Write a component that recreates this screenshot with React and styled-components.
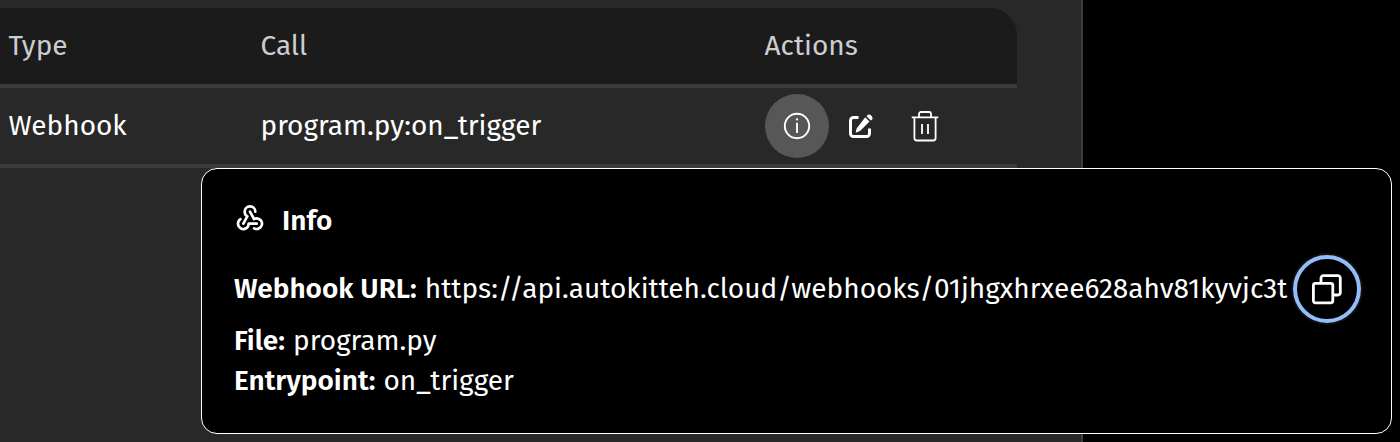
import React from "react";
import styled, { createGlobalStyle } from "styled-components";

const GlobalStyle = createGlobalStyle`
  * { box-sizing: border-box; }
  body {
    margin: 0;
    background: #000;
    color: #fff;
    font-family: "Fira Sans", "Noto Sans", sans-serif;
    font-size: 28px;
    line-height: 40px;
    -webkit-font-smoothing: antialiased;
    overflow: hidden;
  }
`;

const Page = styled.div`
  position: relative;
  height: 442px;
`;

const Panel = styled.main`
  width: 1083px;
  height: 442px;
  padding-top: 8px;
  background: #282828;
  border-right: 2px solid #3d3d3d;
`;

const Table = styled.div`
  width: 1017px;
`;

const Row = styled.div`
  display: grid;
  grid-template-columns: 252px 504px 1fr;
  align-items: center;
  height: 80px;
  padding-left: 8.5px;
  border-bottom: 4px solid #3b3b3b;
`;

const HeaderRow = styled(Row)`
  color: #cdcdd1;
  background: #1b1b1b;
  border-top-right-radius: 27px;
`;

const Text = styled.span`
  white-space: nowrap;
`;

const Label = styled(Text)`
  font-weight: 600;
  margin-right: 8px;
`;

const Actions = styled.div`
  display: flex;
`;

const IconButton = styled.button`
  display: grid;
  place-items: center;
  flex: none;
  width: 64px;
  height: 64px;
  padding: 0;
  border: 0;
  border-radius: 50%;
  color: #fff;
  background: ${(p) => (p.$active ? "#575757" : "transparent")};
`;

const Popover = styled.section`
  position: absolute;
  left: 201px;
  top: 168px;
  width: 1191px;
  height: 266px;
  padding: 32px 31px 0 32px;
  background: #000;
  border: 1px solid #fff;
  border-radius: 16px;
`;

const Title = styled.div`
  display: flex;
  align-items: center;
  gap: 16px;
  height: 40px;

  svg {
    margin-bottom: 8px;
  }
`;

const Line = styled.div`
  display: flex;
  align-items: center;
  height: 40px;
`;

const UrlLine = styled(Line)`
  height: 68px;
  margin: 14px 0 -2px;
`;

const CopyButton = styled(IconButton)`
  width: 68px;
  height: 68px;
  margin-left: auto;
  margin-right: -1px;
  border: 4px solid #93bdf8;
  box-shadow: 0 0 0 2px #101010;
`;

const InfoIcon = () => (
  <svg width="28" height="28" viewBox="0 0 28 28" fill="none" stroke="currentColor">
    <circle cx="14" cy="14" r="12.2" strokeWidth="1.9" />
    <path d="M14 10.7V21" strokeWidth="1.9" />
    <circle cx="14" cy="7.4" r="1.1" fill="currentColor" stroke="none" />
  </svg>
);

const EditIcon = () => (
  <svg width="26" height="26" viewBox="0 0 26 26" fill="none">
    <path d="M10.5 4.5H5.5a3 3 0 0 0-3 3v13a3 3 0 0 0 3 3h13a3 3 0 0 0 3-3V15.5" stroke="currentColor" strokeWidth="3" />
    <path d="M17.2 4.3l4.3 4.3-8.7 8.7c-1.4 1.3-3.2 2-5 2.1.1-1.9.7-4 2-5.3z" fill="currentColor" />
    <path d="M18.5 3.2l1.2-1.2c2-2 6.4 2.4 4.4 4.4l-1.2 1.2z" fill="currentColor" />
  </svg>
);

const TrashIcon = () => (
  <svg width="28" height="32" viewBox="0 0 28 32" fill="none" stroke="currentColor" strokeWidth="1.8">
    <path d="M.7 7.4h26.6M8 7V4a2 2 0 0 1 2-2h8a2 2 0 0 1 2 2v3M3.4 7.4V28a2.5 2.5 0 0 0 2.5 2.5h16.2a2.5 2.5 0 0 0 2.5-2.5V7.4M11 14v10M17 14v10" />
  </svg>
);

const WebhookIcon = () => (
  <svg width="32" height="32" viewBox="0 0 24 24" fill="none" stroke="currentColor" strokeWidth="2" strokeLinecap="round" strokeLinejoin="round">
    <path d="M4.876 13.61a4 4 0 1 0 6.124 3.39h6" />
    <path d="M15.066 20.502a4 4 0 1 0 1.934-7.502c-.706 0-1.424.179-2 .5l-3-5.5" />
    <path d="M16 8a4 4 0 1 0-8 0c0 1.506.77 2.818 2 3.5l-3 5.5" />
  </svg>
);

const CopyIcon = () => (
  <svg width="32" height="32" viewBox="0 0 32 32" fill="none" stroke="currentColor" strokeWidth="2.8">
    <rect x="2.4" y="10.4" width="19.4" height="19.4" rx="2" />
    <path d="M10 10V5a2.3 2.3 0 0 1 2.3-2.3H27A2.3 2.3 0 0 1 29.3 5v14.7A2.3 2.3 0 0 1 27 22h-5" />
  </svg>
);

export default function App() {
  return (
    <>
      <GlobalStyle />
      <Page>
        <Panel>
          <Table>
            <HeaderRow>
              <Text>Type</Text>
              <Text>Call</Text>
              <Text>Actions</Text>
            </HeaderRow>
            <Row>
              <Text>Webhook</Text>
              <Text>program.py:on_trigger</Text>
              <Actions>
                <IconButton $active aria-label="Info"><InfoIcon /></IconButton>
                <IconButton aria-label="Edit"><EditIcon /></IconButton>
                <IconButton aria-label="Delete"><TrashIcon /></IconButton>
              </Actions>
            </Row>
          </Table>
        </Panel>
        <Popover>
          <Title>
            <WebhookIcon />
            <Label>Info</Label>
          </Title>
          <UrlLine>
            <Label>Webhook URL:</Label>
            <Text>https://api.autokitteh.cloud/webhooks/01jhgxhrxee628ahv81kyvjc3t</Text>
            <CopyButton aria-label="Copy URL"><CopyIcon /></CopyButton>
          </UrlLine>
          <Line>
            <Label>File:</Label>
            <Text>program.py</Text>
          </Line>
          <Line>
            <Label>Entrypoint:</Label>
            <Text>on_trigger</Text>
          </Line>
        </Popover>
      </Page>
    </>
  );
}
